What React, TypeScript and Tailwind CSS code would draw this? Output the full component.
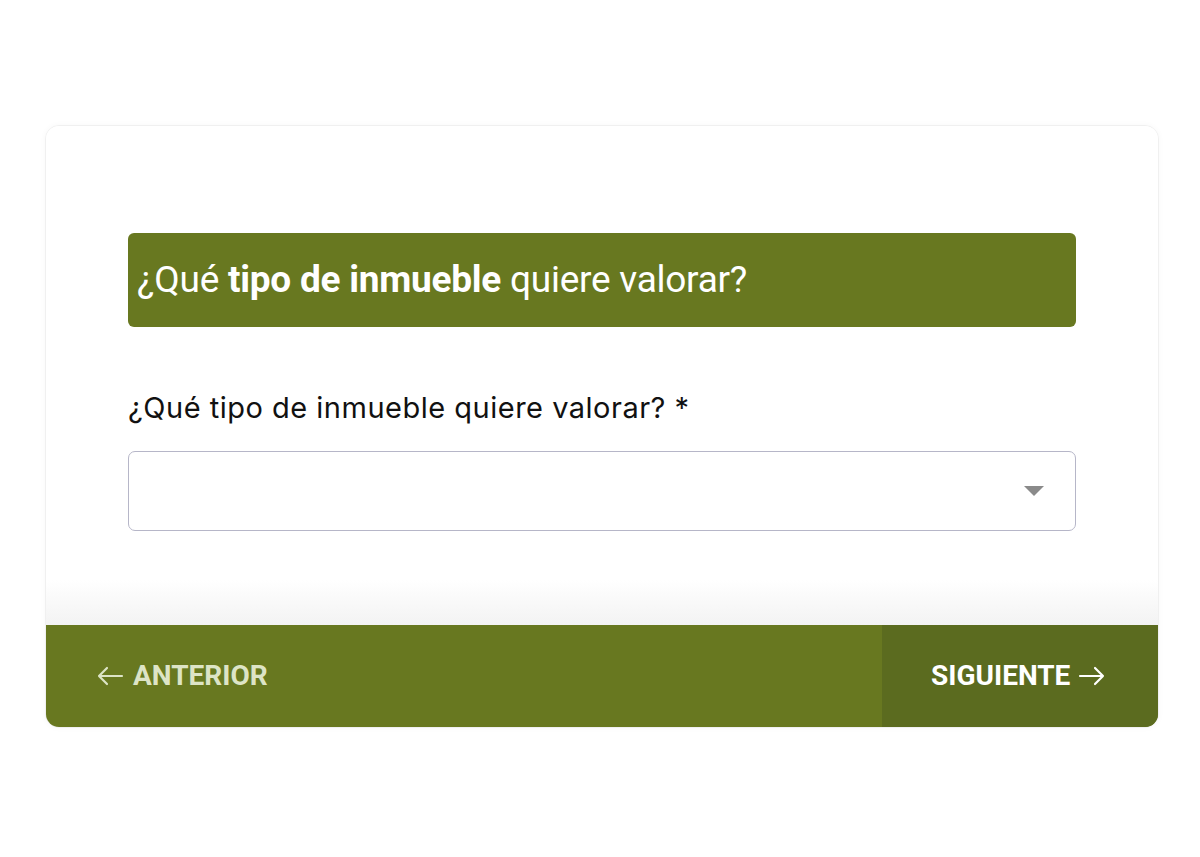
import React from "react";

export default function App() {
  return (
    <div className="w-[1200px] h-[857px] bg-white pt-[125px] pl-[45px]">
      <div className="w-[1114px] h-[603px] rounded-[14px] border border-[#f0f0f0] bg-white overflow-hidden flex flex-col shadow-[0_0_6px_rgba(0,0,0,0.03)]">
        <div className="flex-1 flex flex-col px-[82px] pt-[107px] bg-gradient-to-b from-white from-[91%] to-[#f3f3f3]">
          <div className="h-[94px] rounded-[6px] bg-[#687820] flex items-center pl-[9px]">
            <h2 className="text-white text-[37px] leading-[44px] font-['Roboto',sans-serif] tracking-[-0.25px]">
              ¿Qué <span className="font-bold">tipo de inmueble</span> quiere valorar?
            </h2>
          </div>
          <label className="mt-[64px] text-[29px] leading-[34px] tracking-[0.5px] text-[#111] font-['Inter',sans-serif]">
            ¿Qué tipo de inmueble quiere valorar? *
          </label>
          <div className="mt-[26px] h-[80px] rounded-[7px] border border-[#b6b6c8] bg-white flex items-center justify-end pr-[31px]">
            <svg width="20" height="10" viewBox="0 0 20 10">
              <path d="M0 0 L20 0 L10 10 Z" fill="#8a8a8a" />
            </svg>
          </div>
        </div>
        <div className="h-[102px] flex bg-[#687820] font-['Roboto',sans-serif]">
          <div className="flex-1 flex items-center pl-[51px]">
            <span className="flex items-center gap-[9px] text-[#dde4c6] text-[28px] font-bold">
              <svg width="27" height="22" viewBox="0 0 27 22" fill="none" stroke="#dde4c6" strokeWidth="2.2" strokeLinecap="round" strokeLinejoin="round">
                <path d="M25 11 H2 M10 3 L2 11 L10 19" />
              </svg>
              ANTERIOR
            </span>
          </div>
          <div className="w-[276px] bg-[#5b6b1f] flex items-center pl-[49px]">
            <span className="flex items-center gap-[8px] text-white text-[28px] font-bold">
              SIGUIENTE
              <svg width="28" height="22" viewBox="0 0 28 22" fill="none" stroke="#ffffff" strokeWidth="2.2" strokeLinecap="round" strokeLinejoin="round">
                <path d="M2 11 H25 M17 3 L25 11 L17 19" />
              </svg>
            </span>
          </div>
        </div>
      </div>
    </div>
  );
}
